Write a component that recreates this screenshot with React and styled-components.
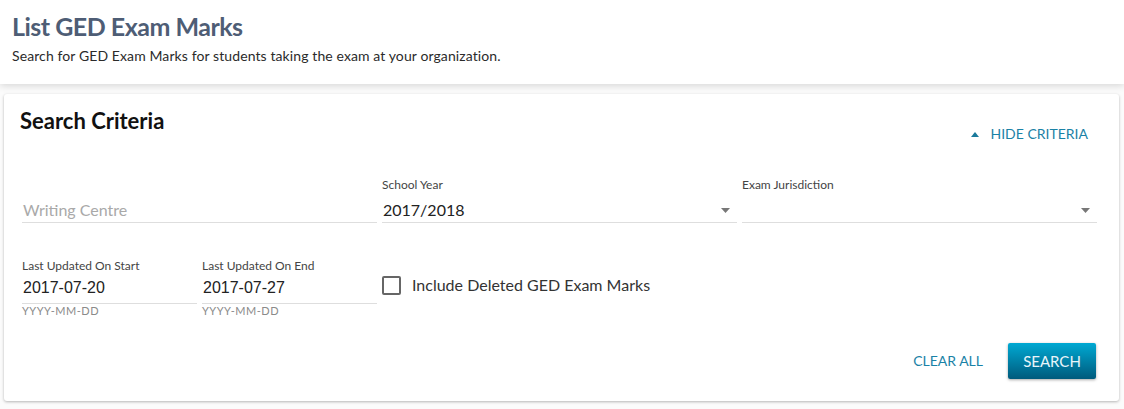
import React from "react"
import styled, { createGlobalStyle } from "styled-components"

const GlobalStyle = createGlobalStyle`
	body {
		margin: 0;
		background: #fbfbfb;
		font-family: Lato, "Open Sans", sans-serif;
		color: #333;
	}
`;

const Header = styled.header`
	background: #ffffff;
	height: 84px;
	box-sizing: border-box;
	padding: 10px 12px 0;
	box-shadow: 0 2px 7px rgba(0, 0, 0, 0.14);
	position: relative;
	z-index: 1;
`;

const PageTitle = styled.h1`
	margin: 0;
	font-size: 25px;
	line-height: 32px;
	font-weight: 700;
	letter-spacing: -0.5px;
	color: #4e5d75;
`;

const Subtitle = styled.p`
	margin: 5px 0 0;
	font-size: 14px;
	line-height: 17px;
	letter-spacing: 0.1px;
	color: #2b2b2b;
`;

const Main = styled.main`
	padding: 10px 5px 8px 4px;
`;

const Card = styled.section`
	background: #ffffff;
	border-radius: 3px;
	box-shadow: 0 1px 3px rgba(0, 0, 0, 0.28);
	padding: 14px 22px 22px 18px;
`;

const CardHead = styled.div`
	display: flex;
	justify-content: space-between;
	align-items: flex-start;
	margin-left: -2px;
`;

const CardTitle = styled.h2`
	margin: 0;
	font-size: 22px;
	line-height: 26px;
	font-weight: 700;
	color: #111;
`;

const LinkButton = styled.button`
	display: flex;
	align-items: center;
	gap: 12px;
	background: none;
	border: 0;
	padding: 0;
	margin-top: ${p => p.$top || 0}px;
	margin-right: ${p => p.$right || 0}px;
	font-family: inherit;
	font-size: 14px;
	line-height: 16px;
	text-transform: uppercase;
	color: #1a82a6;
	cursor: pointer;
`;

const Grid = styled.div`
	display: grid;
	grid-template-columns: repeat(3, 1fr);
	column-gap: 5px;
	margin-top: ${p => p.$top}px;
	align-items: start;
`;

const Pair = styled.div`
	display: grid;
	grid-template-columns: 1fr 1fr;
	column-gap: 5px;
`;

const Field = styled.div`
	display: flex;
	flex-direction: column;
`;

const Label = styled.label`
	font-size: 12px;
	line-height: 14px;
	color: #444;
	margin-bottom: ${p => p.$gap}px;
`;

const Control = styled.div`
	display: flex;
	align-items: center;
	border-bottom: 1px solid #dedede;
	padding: 0 0 ${p => p.$pad || 2}px 1px;
`;

const Value = styled.span`
	flex: 1;
	min-height: 20px;
	font-family: ${p => (p.$arial ? '"Liberation Sans", Arial, sans-serif' : "inherit")};
	font-size: 16px;
	line-height: 20px;
	color: ${p => (p.$placeholder ? "#a9a9a9" : "#222")};
`;

const Caret = styled.svg`
	width: ${p => (p.$up ? 8 : 9)}px;
	height: 5px;
	margin-right: ${p => (p.$up ? 0 : 7)}px;
	fill: ${p => (p.$up ? "#1a7a9c" : "#777")};
`;

const Hint = styled.div`
	font-size: 11px;
	line-height: 13px;
	letter-spacing: 0.5px;
	color: #8a8a8a;
`;

const CheckRow = styled.label`
	display: flex;
	align-items: center;
	gap: 11px;
	font-size: 16px;
	line-height: 20px;
	color: #333;
	margin-top: 16px;
`;

const Box = styled.span`
	width: 15px;
	height: 15px;
	border: 2px solid #666;
	border-radius: 2px;
`;

const Actions = styled.div`
	display: flex;
	justify-content: flex-end;
	align-items: center;
	gap: 25px;
	margin-top: 26px;
	margin-right: 1px;
`;

const PrimaryButton = styled.button`
	width: 88px;
	height: 36px;
	border: 0;
	border-radius: 2px;
	background: linear-gradient(#00a9d3, #005a7c);
	box-shadow: 0 1px 3px rgba(0, 0, 0, 0.35);
	color: #e8f5fa;
	font-family: inherit;
	font-size: 15px;
	text-transform: uppercase;
	cursor: pointer;
`;

const Triangle = ({ up }) => (
	<Caret viewBox={up ? "0 0 8 5" : "0 0 9 5"} $up={up}>
		<polygon points={up ? "0,5 4,0 8,5" : "0,0 9,0 4.5,5"} />
	</Caret>
)

export default function App() {
	return (
		<>
			<GlobalStyle />
			<Header>
				<PageTitle>List GED Exam Marks</PageTitle>
				<Subtitle>Search for GED Exam Marks for students taking the exam at your organization.</Subtitle>
			</Header>

			<Main>
				<Card>
					<CardHead>
						<CardTitle>Search Criteria</CardTitle>
						<LinkButton $top={18} $right={9}>
							<Triangle up />
							Hide Criteria
						</LinkButton>
					</CardHead>

					<Grid $top={36}>
						<Field>
							<Label $gap={8}>&nbsp;</Label>
							<Control>
								<Value $placeholder>Writing Centre</Value>
							</Control>
						</Field>
						<Field>
							<Label $gap={8}>School Year</Label>
							<Control>
								<Value>2017/2018</Value>
								<Triangle />
							</Control>
						</Field>
						<Field>
							<Label $gap={8}>Exam Jurisdiction</Label>
							<Control>
								<Value />
								<Triangle />
							</Control>
						</Field>
					</Grid>

					<Grid $top={36}>
						<Pair>
							<Field>
								<Label $gap={5}>Last Updated On Start</Label>
								<Control $pad={5}>
									<Value $arial>2017-07-20</Value>
								</Control>
								<Hint>YYYY-MM-DD</Hint>
							</Field>
							<Field>
								<Label $gap={5}>Last Updated On End</Label>
								<Control $pad={5}>
									<Value $arial>2017-07-27</Value>
								</Control>
								<Hint>YYYY-MM-DD</Hint>
							</Field>
						</Pair>
						<CheckRow>
							<Box />
							Include Deleted GED Exam Marks
						</CheckRow>
					</Grid>

					<Actions>
						<LinkButton>Clear All</LinkButton>
						<PrimaryButton>Search</PrimaryButton>
					</Actions>
				</Card>
			</Main>
		</>
	)
}
